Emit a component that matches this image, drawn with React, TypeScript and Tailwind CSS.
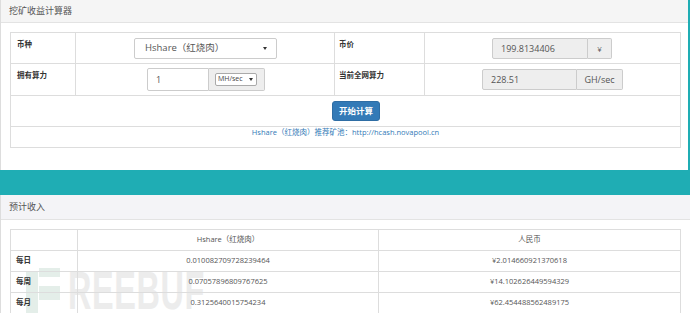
import React from "react";

const FONT = { fontFamily: '"Open Sans", "Noto Sans CJK SC", sans-serif' };

function Caret() {
  return (
    <span className="inline-block w-0 h-0 border-l-[2.5px] border-r-[2.5px] border-t-[3.5px] border-l-transparent border-r-transparent border-t-[#333]" />
  );
}

export default function App() {
  const cell = "border border-[#dddddd] align-top";
  return (
    <div className="w-[690px] h-[313px] overflow-hidden bg-[#1fadb4] relative" style={FONT}>
      {/* Top panel */}
      <div className="mr-[2px] h-[170px] bg-white border-l border-[#dddddd]">
        <div className="h-[23px] bg-[#f5f5f5] border-b border-[#e3e3e3] flex items-center pl-[8px] text-[9px] text-[#555]">
          挖矿收益计算器
        </div>
        <div className="pl-[9px] pt-[9px]">
          <table className="border-collapse w-[670px] table-fixed text-[#333]">
            <colgroup>
              <col className="w-[65px]" />
              <col className="w-[259px]" />
              <col className="w-[90px]" />
              <col className="w-[256px]" />
            </colgroup>
            <tbody>
              <tr className="h-[31px]">
                <td className={`${cell} pl-[6px] pt-[6px] text-[7.5px] font-bold`}>币种</td>
                <td className={`${cell} pt-[5px]`}>
                  <div className="ml-[58px] w-[143px] h-[21px] border border-[#cccccc] rounded-[2px] bg-white flex items-center justify-between pl-[10px] pr-[9px] text-[9.5px] text-[#555]">
                    <span>Hshare（红烧肉）</span>
                    <Caret />
                  </div>
                </td>
                <td className={`${cell} pl-[4px] pt-[6px] text-[7.5px] font-bold`}>币价</td>
                <td className={`${cell} pt-[5px]`}>
                  <div className="ml-[67px] flex h-[21px]">
                    <div className="w-[96px] border border-[#cccccc] rounded-l-[2px] bg-[#eeeeee] flex items-center pl-[8px] text-[9px] text-[#555]">
                      199.8134406
                    </div>
                    <div className="w-[24px] border border-l-0 border-[#cccccc] rounded-r-[2px] bg-[#eeeeee] flex items-center justify-center text-[8px] text-[#555]">
                      ¥
                    </div>
                  </div>
                </td>
              </tr>
              <tr className="h-[32px]">
                <td className={`${cell} pl-[6px] pt-[6px] text-[7.5px] font-bold`}>拥有算力</td>
                <td className={`${cell} pt-[4px]`}>
                  <div className="ml-[71px] flex h-[23px]">
                    <div className="w-[62px] border border-[#cccccc] rounded-l-[2px] bg-white flex items-center pl-[8px] text-[9px] text-[#555]">
                      1
                    </div>
                    <div className="w-[56px] border border-l-0 border-[#cccccc] rounded-r-[2px] bg-[#eeeeee] flex items-center pl-[6px]">
                      <div className="w-[42px] h-[13px] border border-[#aaaaaa] rounded-[2px] bg-white flex items-center justify-between pl-[2px] pr-[3px] text-[7px] text-[#444]">
                        <span>MH/sec</span>
                        <Caret />
                      </div>
                    </div>
                  </div>
                </td>
                <td className={`${cell} pl-[4px] pt-[6px] text-[7.5px] font-bold`}>当前全网算力</td>
                <td className={`${cell} pt-[5px]`}>
                  <div className="ml-[57px] flex h-[21px]">
                    <div className="w-[95px] border border-[#cccccc] rounded-l-[2px] bg-[#eeeeee] flex items-center pl-[8px] text-[9px] text-[#555]">
                      228.51
                    </div>
                    <div className="w-[46px] border border-l-0 border-[#cccccc] rounded-r-[2px] bg-[#eeeeee] flex items-center justify-center text-[9px] text-[#555]">
                      GH/sec
                    </div>
                  </div>
                </td>
              </tr>
              <tr className="h-[31px]">
                <td colSpan={4} className={`${cell} pt-[5px]`}>
                  <div className="flex justify-center">
                    <button className="ml-[21px] w-[48px] h-[20px] bg-[#337ab7] border border-[#2e6da4] rounded-[3px] text-white text-[8.5px] font-bold">
                      开始计算
                    </button>
                  </div>
                </td>
              </tr>
              <tr className="h-[21px]">
                <td colSpan={4} className={`${cell} align-middle text-center text-[7.5px] text-[#337ab7]`}>
                  Hshare（红烧肉）推荐矿池：http://hcash.novapool.cn
                </td>
              </tr>
            </tbody>
          </table>
        </div>
      </div>

      {/* Teal gap */}
      <div className="h-[25px]" />

      {/* Bottom panel */}
      <div className="h-[200px] bg-white border-l border-[#dddddd] relative">
        <div className="h-[25px] bg-[#f4f4f7] border-b border-[#e3e3e3] flex items-center pl-[8px] text-[9px] text-[#555]">
          预计收入
        </div>

        {/* Watermark (behind table text) */}
        <div className="absolute left-[25px] top-[73px] flex items-start pointer-events-none">
          <div className="relative w-[42px] h-[50px]">
            <div className="absolute left-0 top-[3px] w-[12px] h-[47px] bg-[#e4eee9]" />
            <div className="absolute left-[13px] top-0 w-[21px] h-[9px] bg-[#e4eee9]" />
            <div className="absolute left-[13px] top-[18px] w-[21px] h-[14px] bg-[#e4eee9]" />
          </div>
          <div
            className="text-[54px] leading-[44px] font-bold text-[#ececec] origin-top-left scale-x-[0.6] tracking-[1px]"
            style={{ fontFamily: '"Liberation Sans", sans-serif' }}
          >
            REEBUF
          </div>
        </div>

        <div className="pl-[9px] pt-[9px] relative">
          <table className="border-collapse w-[670px] table-fixed text-[7.5px] text-[#555]">
            <colgroup>
              <col className="w-[67px]" />
              <col className="w-[301px]" />
              <col className="w-[302px]" />
            </colgroup>
            <tbody>
              <tr className="h-[21px]">
                <td className="border border-[#dddddd]" />
                <td className="border border-[#dddddd] text-center">Hshare（红烧肉）</td>
                <td className="border border-[#dddddd] text-center">人民币</td>
              </tr>
              {[
                ["每日", "0.010082709728239464", "¥2.014660921370618"],
                ["每周", "0.07057896809767625", "¥14.102626449594329"],
                ["每月", "0.3125640015754234", "¥62.454488562489175"],
              ].map((r) => (
                <tr key={r[0]} className="h-[21px]">
                  <td className="border border-[#dddddd] pl-[5px] font-bold text-[#333]">{r[0]}</td>
                  <td className="border border-[#dddddd] text-center">{r[1]}</td>
                  <td className="border border-[#dddddd] text-center">{r[2]}</td>
                </tr>
              ))}
            </tbody>
          </table>
        </div>
      </div>
    </div>
  );
}
